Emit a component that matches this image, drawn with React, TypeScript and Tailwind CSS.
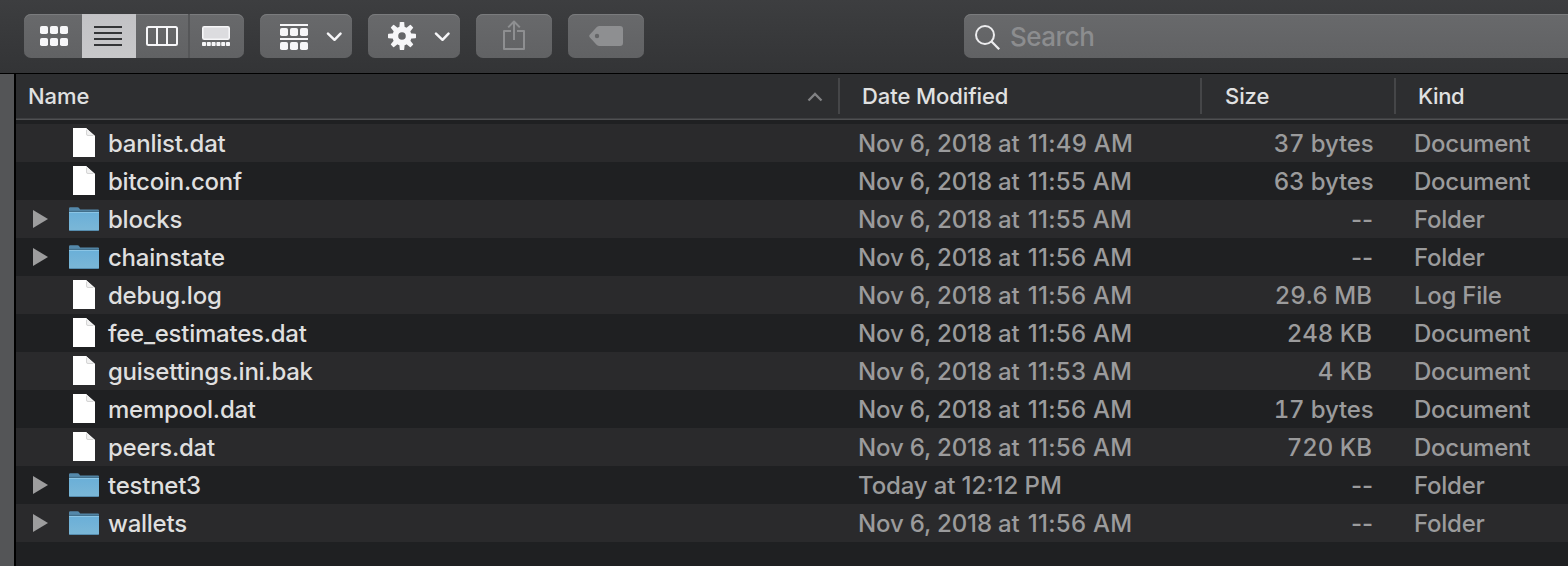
import React from "react";

type Entry = {
  name: string;
  day: string;
  time: string;
  size: string;
  kind: "Document" | "Folder" | "Log File";
};

const entries: Entry[] = [
  { name: "banlist.dat", day: "Nov 6, 2018 at", time: "11:49 AM", size: "37 bytes", kind: "Document" },
  { name: "bitcoin.conf", day: "Nov 6, 2018 at", time: "11:55 AM", size: "63 bytes", kind: "Document" },
  { name: "blocks", day: "Nov 6, 2018 at", time: "11:55 AM", size: "--", kind: "Folder" },
  { name: "chainstate", day: "Nov 6, 2018 at", time: "11:56 AM", size: "--", kind: "Folder" },
  { name: "debug.log", day: "Nov 6, 2018 at", time: "11:56 AM", size: "29.6 MB", kind: "Log File" },
  { name: "fee_estimates.dat", day: "Nov 6, 2018 at", time: "11:56 AM", size: "248 KB", kind: "Document" },
  { name: "guisettings.ini.bak", day: "Nov 6, 2018 at", time: "11:53 AM", size: "4 KB", kind: "Document" },
  { name: "mempool.dat", day: "Nov 6, 2018 at", time: "11:56 AM", size: "17 bytes", kind: "Document" },
  { name: "peers.dat", day: "Nov 6, 2018 at", time: "11:56 AM", size: "720 KB", kind: "Document" },
  { name: "testnet3", day: "Today at", time: "12:12 PM", size: "--", kind: "Folder" },
  { name: "wallets", day: "Nov 6, 2018 at", time: "11:56 AM", size: "--", kind: "Folder" },
];

const surface =
  "bg-linear-to-b from-[#68696b] to-[#616264] shadow-[inset_0_1px_0_#7a7b7d]";

function GridIcon() {
  return (
    <svg width="28" height="20" fill="#f6f6f8">
      {[0, 12].map((y) =>
        [0, 10, 20].map((x) => <rect key={`${x}-${y}`} x={x} y={y} width="8" height="8" rx="1.8" />),
      )}
    </svg>
  );
}

function ListIcon() {
  return (
    <svg width="28" height="20" fill="#343537">
      {[0, 6, 12, 18].map((y) => (
        <rect key={y} y={y} width="28" height="2" />
      ))}
    </svg>
  );
}

function ColumnsIcon() {
  return (
    <svg width="32" height="20" fill="none" stroke="#f6f6f8" strokeWidth="2">
      <rect x="1" y="1" width="30" height="18" rx="1.5" />
      <path d="M11 1v18M21 1v18" />
    </svg>
  );
}

function GalleryIcon() {
  return (
    <svg width="28" height="20">
      <rect x="0.8" y="0.8" width="26.4" height="12.4" rx="1.4" fill="#dcdcdf" stroke="#f6f6f8" strokeWidth="1.6" />
      {[0, 4.8, 9.6, 14.4, 19.2, 24].map((x) => (
        <rect key={x} x={x} y="16" width="4" height="4" rx="0.8" fill="#f6f6f8" />
      ))}
    </svg>
  );
}

function GroupIcon() {
  return (
    <svg width="28" height="26" fill="#f6f6f8">
      {[0, 14].map((y) => (
        <g key={y}>
          <rect y={y} width="28" height="2" />
          {[0, 10, 20].map((x) => (
            <rect key={x} x={x} y={y + 4} width="8" height="8" rx="1.8" />
          ))}
        </g>
      ))}
    </svg>
  );
}

function GearIcon() {
  return (
    <svg width="28" height="28" viewBox="-14 -14 28 28" fill="#f6f6f8">
      {[0, 45, 90, 135, 180, 225, 270, 315].map((a) => (
        <path key={a} transform={`rotate(${a})`} d="M-2.8 -7 L-2.2 -13.4 Q-2.1 -14 -1.5 -14 H1.5 Q2.1 -14 2.2 -13.4 L2.8 -7 Z" />
      ))}
      <circle r="6.7" fill="none" stroke="#f6f6f8" strokeWidth="5.8" />
    </svg>
  );
}

function Chevron() {
  return (
    <svg width="16" height="10" fill="none" stroke="#f6f6f8" strokeWidth="2.5" strokeLinecap="round" strokeLinejoin="round">
      <path d="M2 1.6 8.500 7.800l6-6.200" />
    </svg>
  );
}

function ShareIcon() {
  return (
    <svg width="22" height="30" fill="none" stroke="#8e8f91" strokeWidth="2" strokeLinejoin="round">
      <path d="M8 11H1v18h20V11h-7M11 20V1.500M5.200 7.400 11 1.500l5.800 5.900" />
    </svg>
  );
}

function TagIcon() {
  return (
    <svg width="34" height="20" fill="#8e8f91" fillRule="evenodd">
      <path d="M10.500 0H31q3 0 3 3v14q0 3-3 3H10.500Q9 20 7.800 18.900L.9 11.600Q-.5 10 .9 8.400L7.800 1.100Q9 0 10.500 0ZM8 7.800a2.200 2.200 0 1 0 0 4.400a2.200 2.200 0 1 0 0-4.400Z" />
    </svg>
  );
}

function SearchIcon() {
  return (
    <svg width="26" height="26" fill="none" stroke="#ececee" strokeWidth="2">
      <circle cx="10" cy="10" r="9" />
      <path d="m16.500 16.500 7.700 7.700" strokeWidth="2.300" />
    </svg>
  );
}

function DocumentIcon() {
  return (
    <svg width="22" height="29">
      <path d="M0 0h13l9 8v21H0Z" fill="#fff" />
      <path d="M13 0v6q0 2 2 2h7Z" fill="#f1f1f1" />
      <path d="M13.500 2v4q0 1.500 1.500 1.500h5" fill="none" stroke="#c9c9c9" strokeWidth="0.700" />
    </svg>
  );
}

function FolderIcon() {
  return (
    <svg width="30" height="24">
      <defs>
        <linearGradient id="folder-front" x2="0" y2="1">
          <stop offset="0" stopColor="#6aafd8" />
          <stop offset="1" stopColor="#7bb7d7" />
        </linearGradient>
      </defs>
      <path d="M0 1.500Q0 .3 1.200.3H8.500q1 0 1.600.8l.6.8q.4.500 1.300.500H29q1 0 1 1V8H0Z" fill="#5488aa" />
      <path d="M0 3.800h30V8H0Z" fill="#426f8b" />
      <path d="M0 5h30v17.800q0 1-1 1H1q-1 0-1-1Z" fill="url(#folder-front)" />
      <path d="M0 5.500h30" stroke="#8bc5e5" />
      <path d="M.5 23.500h29" stroke="#568daf" />
    </svg>
  );
}

function Toolbar() {
  return (
    <div className="flex h-[74px] items-start border-b border-black bg-linear-to-b from-[#3d3e40] to-[#333436] pt-[14px] pl-6">
      <div className={`flex h-11 w-[220px] overflow-hidden rounded-[7px] ${surface}`}>
        <div className="flex w-[58px] items-center pl-4"><GridIcon /></div>
        <div className="flex w-[54px] items-center bg-linear-to-b from-[#c2c2c5] to-[#c8c8ca] pl-3"><ListIcon /></div>
        <div className="flex w-[54px] items-center border-r-2 border-[#555658] pl-[10px]"><ColumnsIcon /></div>
        <div className="flex w-[54px] items-center pl-3"><GalleryIcon /></div>
      </div>
      <div className={`ml-4 flex h-11 w-[92px] items-start rounded-[7px] pt-[10px] pl-5 ${surface}`}>
        <GroupIcon />
        <span className="mt-[7.500px] ml-[18px]"><Chevron /></span>
      </div>
      <div className={`ml-4 flex h-11 w-[92px] items-start rounded-[7px] pt-2 pl-5 ${surface}`}>
        <GearIcon />
        <span className="mt-[9.500px] ml-[18px]"><Chevron /></span>
      </div>
      <div className={`ml-4 flex h-11 w-[76px] justify-center rounded-[7px] pt-[6px] ${surface}`}>
        <ShareIcon />
      </div>
      <div className={`ml-4 flex h-11 w-[76px] items-center justify-center rounded-[7px] ${surface}`}>
        <TagIcon />
      </div>
      <div className={`ml-auto flex h-11 w-[604px] items-center rounded-l-[7px] pl-[11px] ${surface}`}>
        <span className="mt-[4px]"><SearchIcon /></span>
        <span className="mt-[2px] ml-[9px] text-[26px] leading-none font-[450] tracking-[-0.5px] text-[#8c8d8f]">Search</span>
      </div>
    </div>
  );
}

function ColumnHeader() {
  return (
    <div className="flex h-[46px] items-start border-b border-[#4f5052] bg-[#2d2e30] pt-1 text-[22px] leading-[37px] font-medium tracking-[-0.080px] text-[#e0e1e1] shadow-[inset_0_-1px_0_#3e3f41]">
      <div className="flex h-[37px] w-[822px] items-center justify-between pr-[15px] pl-3">
        <span>Name</span>
        <svg width="16" height="10" fill="none" stroke="#818284" strokeWidth="2.300">
          <path d="m1.500 8.500 6.500-6.500 6.500 6.500" />
        </svg>
      </div>
      <div className="h-9 w-[2px] bg-[#454648]" />
      <div className="w-[360px] pl-[22px]">Date Modified</div>
      <div className="h-9 w-[2px] bg-[#454648]" />
      <div className="w-[192px] pl-[23px]">Size</div>
      <div className="h-9 w-[2px] bg-[#454648]" />
      <div className="pl-[22px] tracking-[-0.400px]">Kind</div>
    </div>
  );
}

function Row({ entry }: { entry: Entry }) {
  const folder = entry.kind === "Folder";
  const sizeStyle =
    entry.size === "--"
      ? "pr-px"
      : entry.size.endsWith("B")
        ? "pr-[2px] tabular-nums tracking-[0px]"
        : "pr-[0.500px] tabular-nums";
  return (
    <div className="flex h-[38px] items-center text-[24px] leading-[38px] font-[450] tracking-[-0.150px] text-[#9b9b9c] odd:bg-[#2a2a2c] even:bg-[#1f2022]">
      <div className="flex w-[842px] items-center">
        <div className="w-[53px] pl-[17px]">
          {folder && (
            <svg width="15" height="18" fill="#9d9d9e">
              <path d="M0 0v18l15-9Z" />
            </svg>
          )}
        </div>
        <div className={folder ? "w-[39px]" : "-mt-[2px] w-[39px] pl-[3.500px]"}>
          {folder ? <FolderIcon /> : <DocumentIcon />}
        </div>
        <span className="pt-[2px] tracking-[-0.250px] text-[#dfdfdf]">{entry.name}</span>
      </div>
      <div className="w-[316px] pt-[2px]">
        {entry.day}{" "}
        <span className={entry.time.startsWith("11") ? "ml-[2px] tracking-[0.250px]" : "tracking-[0px]"}>{entry.time}</span>
      </div>
      <div className={`w-[200px] pt-[2px] text-right ${sizeStyle}`}>{entry.size}</div>
      <div className="pt-[2px] pl-10 tracking-[-0.250px]">{entry.kind}</div>
    </div>
  );
}

export default function App() {
  return (
    <div className="flex h-[566px] w-[1568px] flex-col overflow-hidden bg-[#1f2022] font-['Inter','Liberation_Sans',sans-serif] whitespace-nowrap [&_svg]:block [&_svg]:shrink-0">
      <Toolbar />
      <div className="flex min-h-0 flex-1">
        <div className="w-4 shrink-0 border-r-2 border-black bg-[#545557]" />
        <div className="min-w-0 flex-1 bg-[#1f2022]">
          <ColumnHeader />
          <div className="pt-1">
            {entries.map((entry) => (
              <Row key={entry.name} entry={entry} />
            ))}
          </div>
        </div>
      </div>
    </div>
  );
}
